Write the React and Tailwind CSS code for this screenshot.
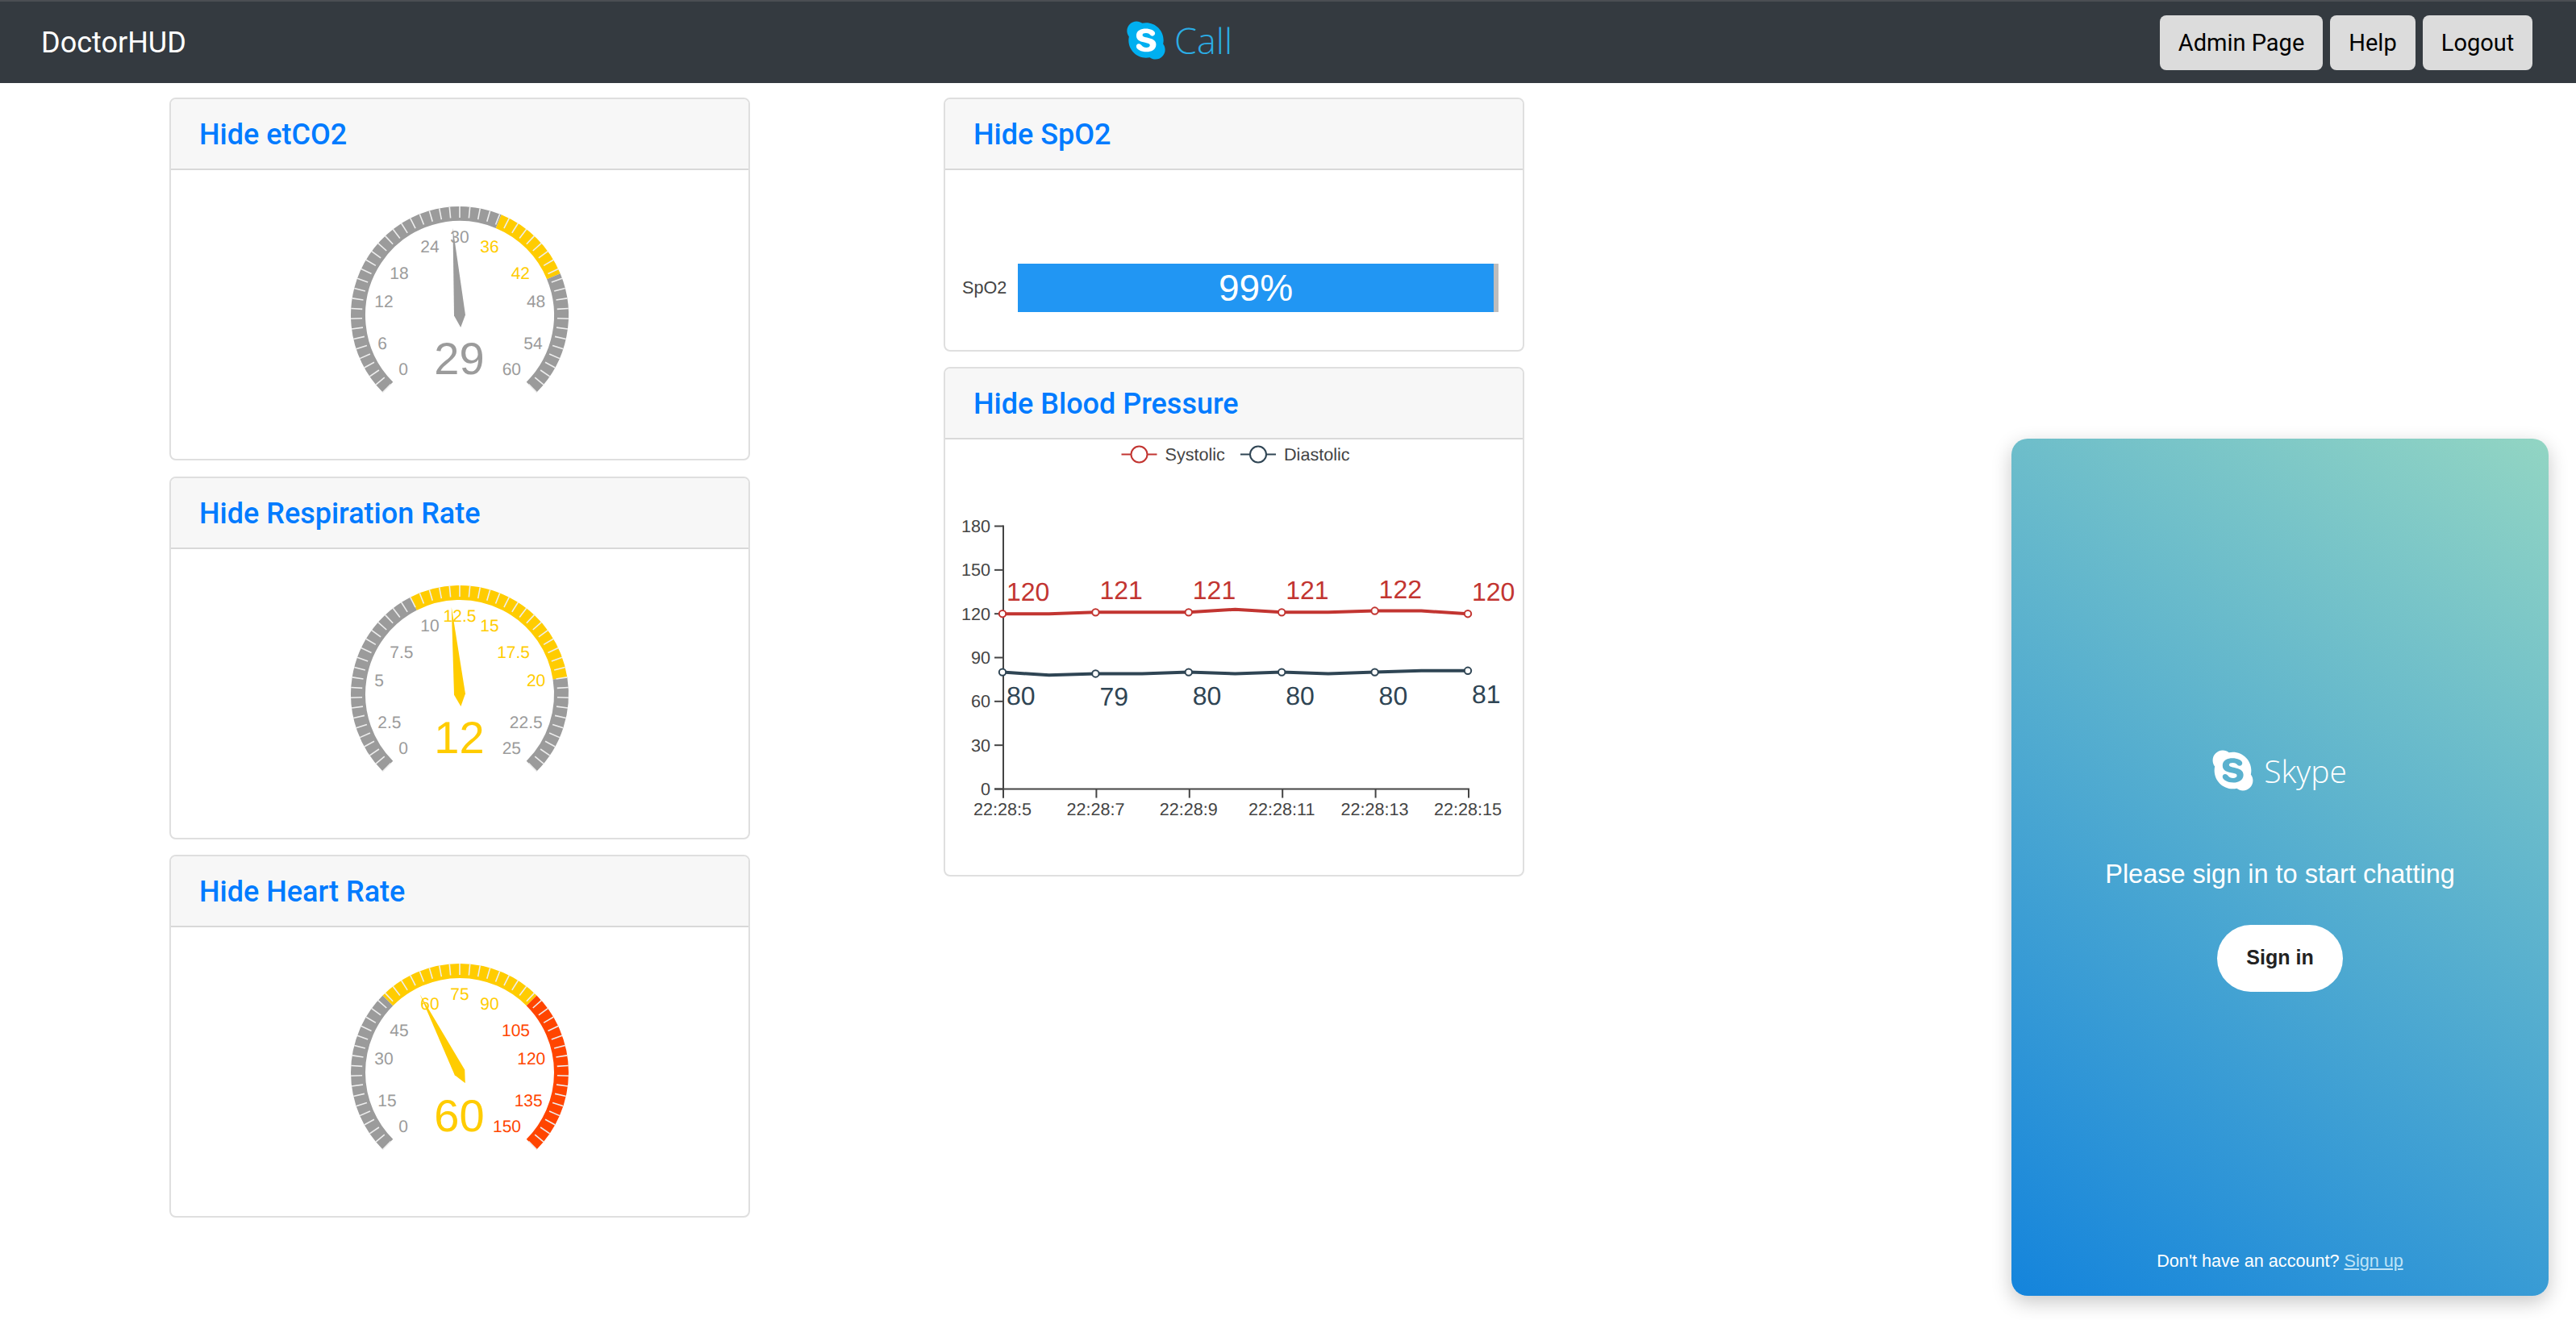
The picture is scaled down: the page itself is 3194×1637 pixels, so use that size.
import React from 'react';
import { FaSkype } from 'react-icons/fa';

const GRAY = '#9b9b9b';
const YELLOW = '#ffcc00';
const RED = '#ff4500';

// label places are relative to the gauge centre, [dx, dy, anchor]
const labelSpots = [
  [-75.7, 66.7, 'start'],
  [-101.7, 34.7, 'start'],
  [-105.7, -17, 'start'],
  [-86.7, -52, 'start'],
  [-37, -85, 'middle'],
  [0, -97.7, 'middle'],
  [37, -85, 'middle'],
  [87, -52, 'end'],
  [106.3, -17, 'end'],
  [102.7, 34.7, 'end'],
  [76, 66.7, 'end'],
];

const polar = (r, deg) => {
  const a = (deg * Math.PI) / 180;
  return [r * Math.cos(a), -r * Math.sin(a)];
};

function arcPath(r, from, to) {
  const [x1, y1] = polar(r, from);
  const [x2, y2] = polar(r, to);
  const large = from - to > 180 ? 1 : 0;
  return `M${x1} ${y1}A${r} ${r} 0 ${large} 1 ${x2} ${y2}`;
}

function Gauge({ max, value, zones }) {
  const angleOf = (v) => 225 - (v / max) * 270;
  const colorOf = (v) => zones.find((z) => v <= z[0])[1];
  let prev = 0;
  const segs = zones.map(([end, color]) => {
    const seg = { from: angleOf(prev), to: angleOf(end), color };
    prev = end;
    return seg;
  });
  const labels = labelSpots.map((s, i) => ({ v: (max / 10) * i, s }));
  const turn = (value / max) * 270 - 135;

  return (
    <svg viewBox="-358 -180 716 359" className="block h-[359px] w-[716px] font-['Liberation_Sans',sans-serif] [text-rendering:geometricPrecision]">
      {segs.map((s, i) => (
        <path key={i} d={arcPath(126, s.from, s.to)} fill="none" stroke={s.color} strokeWidth="18" />
      ))}
      {Array.from({ length: 51 }, (_, i) => {
        const a = 225 - i * 5.4;
        const [x1, y1] = polar(135, a);
        const [x2, y2] = polar(121, a);
        return <line key={i} x1={x1} y1={y1} x2={x2} y2={y2} stroke="#eeeeee" strokeWidth="1.6" />;
      })}
      {labels.map(({ v, s }) => (
        <text key={v} x={s[0]} y={s[1] + 7.2} textAnchor={s[2]} fontSize="21" fill={colorOf(v)}>
          {v}
        </text>
      ))}
      <polygon points="0,-108.6 7,0 0,15 -7,0" fill={colorOf(value)} transform={`rotate(${turn})`} />
      <text x="-0.5" y="72.5" textAnchor="middle" fontSize="56" fill={colorOf(value)}>
        {value}
      </text>
    </svg>
  );
}

function Card({ title, children, className }) {
  return (
    <div className={`w-[720px] overflow-hidden rounded-lg border-2 border-[#dfdfdf] bg-white ${className || ''}`}>
      <div className="flex h-[88px] items-center border-b-2 border-[#d9d9d9] bg-[#f7f7f7] px-[35px] pt-[2px]">
        <a className="text-[36px] font-medium text-[#007bff]">{title}</a>
      </div>
      {children}
    </div>
  );
}

const sys = [120, 120, 121, 121, 121, 123, 121, 121, 122, 122, 120];
const dia = [80, 78, 79, 79, 80, 79, 80, 79, 80, 81, 81];
const px = (i) => 1243 + i * 57.7;
const py = (v) => 980 - v * 1.811;

function Series({ data, color, labelGap }) {
  return (
    <g>
      <polyline points={data.map((v, i) => `${px(i)},${py(v)}`).join(' ')} fill="none" stroke={color} strokeWidth="4" />
      {data.map((v, i) =>
        i % 2 === 0 ? (
          <g key={i}>
            <circle cx={px(i)} cy={py(v)} r="4.2" fill="#fff" stroke={color} strokeWidth="2" />
            <text x={px(i) + 5} y={py(v) + labelGap} fontSize="32" fill={color}>
              {v}
            </text>
          </g>
        ) : null
      )}
    </g>
  );
}

function LegendIcon({ cx, color }) {
  return (
    <g fill="none" stroke={color} strokeWidth="2">
      <line x1={cx - 22} x2={cx - 10} y1="565" y2="565" />
      <line x1={cx + 10} x2={cx + 22} y1="565" y2="565" />
      <circle cx={cx} cy="565" r="10" />
    </g>
  );
}

function BloodChart() {
  const ticksY = [0, 30, 60, 90, 120, 150, 180];
  const ticksX = ['22:28:5', '22:28:7', '22:28:9', '22:28:11', '22:28:13', '22:28:15'];
  return (
    <svg viewBox="1172 546.5 716 540" className="block h-[540px] w-[716px] font-['Liberation_Sans',sans-serif] [text-rendering:geometricPrecision]">
      <LegendIcon cx={1412.5} color="#c23531" />
      <text x="1444.5" y="572.5" fontSize="21.6" fill="#444">Systolic</text>
      <LegendIcon cx={1560} color="#2f4554" />
      <text x="1592" y="572.5" fontSize="21.6" fill="#444">Diastolic</text>

      <g stroke="#444" strokeWidth="2">
        <line x1="1244" x2="1244" y1="653" y2="991" />
        <line x1="1233" x2="1822" y1="980" y2="980" />
        {ticksY.map((t) => (
          <line key={t} x1="1233" x2="1244" y1={py(t)} y2={py(t)} />
        ))}
        {ticksX.map((t, i) => (
          <line key={t} x1={1244 + i * 115.4} x2={1244 + i * 115.4} y1="980" y2="991" />
        ))}
      </g>
      {ticksY.map((t) => (
        <text key={t} x="1228" y={py(t) + 7.6} textAnchor="end" fontSize="21.6" fill="#444">
          {t}
        </text>
      ))}
      {ticksX.map((t, i) => (
        <text key={t} x={1243 + i * 115.4} y="1012" textAnchor="middle" fontSize="21.6" fill="#444">
          {t}
        </text>
      ))}

      <Series data={sys} color="#c23531" labelGap={-16} />
      <Series data={dia} color="#2f4554" labelGap={40} />
    </svg>
  );
}

function SkypeMark({ className, behind }) {
  return (
    <span className={`relative inline-block ${className}`}>
      {behind && <span className="absolute inset-[18%] rounded-full bg-white" />}
      <FaSkype className="relative h-full w-full" />
    </span>
  );
}

function NavButton({ children, className }) {
  return (
    <button className={`h-[68px] rounded-lg bg-[#dcdcdc] pt-[2px] text-[29px] text-black ${className}`}>{children}</button>
  );
}

export default function App() {
  return (
    <div className="relative h-[1637px] overflow-hidden bg-white font-['Roboto',sans-serif]">
      <header className="flex h-[103px] items-center border-t-2 border-[#4b4e53] bg-[#343a40] pl-[51px] pr-[54px]">
        <span className="w-[179px] text-[36px] text-white">DoctorHUD</span>
        <div className="ml-[1164px] flex items-center gap-[8px] text-[#2badE5]">
          <SkypeMark className="mb-[6px] h-[54px] w-[54px] text-[#00aff0]" behind />
          <span className="mb-[6px] font-['Open_Sans',sans-serif] text-[45px] font-light leading-none">Call</span>
        </div>
        <div className="ml-auto flex gap-[9px]">
          <NavButton className="w-[202px]">Admin Page</NavButton>
          <NavButton className="w-[106px]">Help</NavButton>
          <NavButton className="w-[136px]">Logout</NavButton>
        </div>
      </header>

      <main className="flex gap-[240px] pl-[210px] pt-[18px]">
        <div className="flex flex-col gap-[19.5px]">
          <Card title="Hide etCO2" className="h-[450px]">
            <Gauge max={60} value={29} zones={[[35, GRAY], [45, YELLOW], [60, GRAY]]} />
          </Card>
          <Card title="Hide Respiration Rate" className="h-[450px]">
            <Gauge max={25} value={12} zones={[[10, GRAY], [20, YELLOW], [25, GRAY]]} />
          </Card>
          <Card title="Hide Heart Rate" className="h-[450px]">
            <Gauge max={150} value={60} zones={[[50, GRAY], [100, YELLOW], [150, RED]]} />
          </Card>
        </div>

        <div className="flex flex-col gap-[19px]">
          <Card title="Hide SpO2" className="h-[315px]">
            <div className="flex items-center pl-[21px] pt-[116px] font-['Liberation_Sans',sans-serif]">
              <span className="w-[69px] text-[21.6px] text-[#444]">SpO2</span>
              <div className="h-[60px] w-[596px] bg-[#bdbdbd]">
                <div className="flex h-full w-[99%] items-center justify-center bg-[#2196f3] text-[46px] text-white">
                  99%
                </div>
              </div>
            </div>
          </Card>
          <Card title="Hide Blood Pressure" className="h-[632px]">
            <BloodChart />
          </Card>
        </div>
      </main>

      <aside className="absolute bottom-[30px] right-[34px] flex h-[1063px] w-[666px] flex-col items-center rounded-[20px] bg-[linear-gradient(33deg,#1484dc,#92d5c3)] pt-[386px] font-['Liberation_Sans',sans-serif] text-white shadow-[0_8px_24px_rgba(0,0,0,0.22)]">
        <div className="flex h-[50px] items-center gap-[10px] pr-1">
          <SkypeMark className="h-[57px] w-[57px] text-white" />
          <span className="font-['Open_Sans',sans-serif] text-[39px] font-light leading-none">Skype</span>
        </div>
        <p className="mt-[88px] text-[32.5px] leading-none">Please sign in to start chatting</p>
        <button className="mt-[46px] h-[83px] w-[156px] rounded-full bg-white text-[25px] font-bold text-[#222]">
          Sign in
        </button>
        <p className="mt-auto mb-[32px] text-[21.6px] leading-none">
          Don't have an account? <a className="text-[#bfe4f7] underline">Sign up</a>
        </p>
      </aside>
    </div>
  );
}
